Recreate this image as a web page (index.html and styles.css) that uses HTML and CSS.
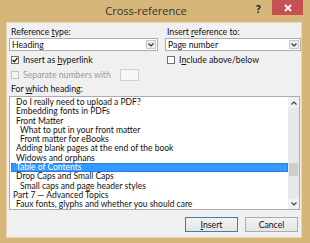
FILE: index.html
```html
<!DOCTYPE html>
<html lang="en">
<head>
  <meta charset="UTF-8">
  <title>Cross-reference</title>
  <link rel="stylesheet" href="styles.css">
</head>
<body>

<div class="window">
  <div class="titlebar">
    <div class="title">Cross-reference</div>
    <div class="help">?</div>
    <div class="close">
      <svg width="8" height="8" viewBox="0 0 8 8"><path d="M1 1 L7 7 M7 1 L1 7" stroke="#fff" stroke-width="1.8"/></svg>
    </div>
  </div>

  <div class="content">
    <div class="top-grid">
      <div class="field">
        <div class="label">Reference <u>t</u>ype:</div>
        <div class="combo">
          <span>Heading</span>
          <div class="drop"><svg width="6" height="4" viewBox="0 0 6 4"><path d="M0.5 0.5 L3 3 L5.5 0.5" fill="none" stroke="#333" stroke-width="1.2"/></svg></div>
        </div>
      </div>
      <div class="field">
        <div class="label">Insert <u>r</u>eference to:</div>
        <div class="combo">
          <span>Page number</span>
          <div class="drop"><svg width="6" height="4" viewBox="0 0 6 4"><path d="M0.5 0.5 L3 3 L5.5 0.5" fill="none" stroke="#333" stroke-width="1.2"/></svg></div>
        </div>
      </div>
      <label class="check">
        <span class="box"><svg width="6" height="6" viewBox="0 0 6 6"><path d="M0.6 3 L2.3 4.8 L5.4 0.8" fill="none" stroke="#111" stroke-width="1.3"/></svg></span>
        <span>Insert as <u>h</u>yperlink</span>
      </label>
      <label class="check">
        <span class="box"></span>
        <span>I<u>n</u>clude above/below</span>
      </label>
    </div>

    <div class="separate">
      <label class="check disabled">
        <span class="box"></span>
        <span>Separate numbers with</span>
      </label>
      <div class="sepbox"></div>
    </div>

    <div class="label heading-label">For <u>w</u>hich heading:</div>

    <div class="listbox">
      <ul class="items">
        <li class="l2">Do I really need to upload a PDF?</li>
        <li class="l2">Embedding fonts in PDFs</li>
        <li class="l2">Front Matter</li>
        <li class="l3">What to put in your front matter</li>
        <li class="l3">Front matter for eBooks</li>
        <li class="l2">Adding blank pages at the end of the book</li>
        <li class="l2">Widows and orphans</li>
        <li class="l2 selected">Table of Contents</li>
        <li class="l2">Drop Caps and Small Caps</li>
        <li class="l3">Small caps and page header styles</li>
        <li class="l1">Part 7 — Advanced Topics</li>
        <li class="l2">Faux fonts, glyphs and whether you should care</li>
      </ul>
      <div class="scrollbar">
        <div class="arrow"><svg width="6" height="4" viewBox="0 0 6 4"><path d="M0.5 3.5 L3 1 L5.5 3.5" fill="none" stroke="#444" stroke-width="1.2"/></svg></div>
        <div class="track"><div class="thumb"></div></div>
        <div class="arrow"><svg width="6" height="4" viewBox="0 0 6 4"><path d="M0.5 0.5 L3 3 L5.5 0.5" fill="none" stroke="#444" stroke-width="1.2"/></svg></div>
      </div>
    </div>

    <div class="buttons">
      <button class="btn default" type="button"><u>I</u>nsert</button>
      <button class="btn" type="button">Cancel</button>
    </div>
  </div>
</div>

</body>
</html>
```

FILE: styles.css
```css
body {
  margin: 0;
  font-family: Lato, 'Open Sans', sans-serif;
  font-size: 8.7px;
  color: #111;
}

.window {
  width: 310px;
  height: 243px;
  box-sizing: border-box;
  background: #d7b67a;
  padding: 0 8px 5px 6px;
  display: flex;
  flex-direction: column;
}

.titlebar {
  height: 22px;
  flex: none;
  display: flex;
  align-items: flex-start;
}

.title {
  flex: 1;
  text-align: center;
  font-family: 'Open Sans', sans-serif;
  font-size: 11px;
  color: #333;
  line-height: 22px;
  padding-left: 30px;
}

.help {
  width: 12px;
  font-family: 'Open Sans', sans-serif;
  font-weight: bold;
  font-size: 10px;
  color: #222;
  line-height: 18px;
  margin-right: 4px;
}

.close {
  width: 31px;
  height: 15px;
  background: #c75050;
  display: flex;
  align-items: center;
  justify-content: center;
  margin-right: -1px;
}

.content {
  flex: 1;
  background: #f0f0f0;
  border: 1px solid #e6d6b6;
  padding: 4px 2px 0 2px;
  display: flex;
  flex-direction: column;
}

.top-grid {
  display: grid;
  grid-template-columns: 149px 136px;
  column-gap: 7px;
  row-gap: 4px;
}

.label {
  padding-left: 2px;
  line-height: 10px;
  height: 10px;
}

.field .label {
  margin-bottom: 1px;
}

.combo {
  height: 13px;
  box-sizing: border-box;
  background: #fff;
  border: 1px solid #acacac;
  display: flex;
  align-items: center;
  padding-left: 2px;
  line-height: 11px;
}

.combo span {
  flex: 1;
}

.drop {
  width: 10px;
  height: 9px;
  margin-right: 1px;
  box-sizing: border-box;
  border: 1px solid #c8c8c8;
  background: #ededed;
  display: flex;
  align-items: center;
  justify-content: center;
}

.check {
  display: flex;
  align-items: center;
  gap: 4px;
  padding-left: 2px;
  height: 10px;
  line-height: 10px;
}

.box {
  width: 8px;
  height: 8px;
  flex: none;
  box-sizing: border-box;
  border: 1px solid #707070;
  background: #fff;
  display: flex;
  align-items: center;
  justify-content: center;
}

.check.disabled {
  color: #9a9a9a;
}

.check.disabled .box {
  border-color: #c4c4c4;
  background: #f4f4f4;
}

.separate {
  display: flex;
  align-items: center;
  margin-top: 3px;
  height: 13px;
}

.sepbox {
  width: 19px;
  height: 12px;
  margin-left: 9px;
  box-sizing: border-box;
  border: 1px solid #cfcfcf;
  background: #f7f7f7;
}

.heading-label {
  margin-top: 3px;
}

.listbox {
  margin-top: 2px;
  height: 114px;
  width: 291px;
  box-sizing: border-box;
  border: 1px solid #acacac;
  background: #fff;
  display: flex;
  overflow: hidden;
}

.items {
  list-style: none;
  margin: 0;
  padding: 1px 0 0 1px;
  flex: 1;
  font-size: 8.5px;
  line-height: 9.3px;
  white-space: nowrap;
  overflow: hidden;
}

.items li {
  height: 9.3px;
}

.items .l1 { padding-left: 2px; }
.items .l2 { padding-left: 5px; }
.items .l3 { padding-left: 9px; }

.items .selected {
  background: #3399ff;
  color: #fff;
  box-shadow: inset 0 0 0 1px #2a80d8;
}

.scrollbar {
  width: 11px;
  background: #e8e8e8;
  display: flex;
  flex-direction: column;
}

.arrow {
  height: 11px;
  display: flex;
  align-items: center;
  justify-content: center;
  background: #f0f0f0;
}

.track {
  flex: 1;
  padding-top: 55px;
}

.thumb {
  height: 13px;
  margin: 0 1px;
  background: #cdcdcd;
}

.buttons {
  display: flex;
  justify-content: flex-end;
  gap: 7px;
  margin-top: 7px;
  padding-right: 1px;
}

.btn {
  width: 53px;
  height: 15px;
  box-sizing: border-box;
  border: 1px solid #acacac;
  background: linear-gradient(#f2f2f2, #e5e5e5);
  font-family: inherit;
  font-size: 8.7px;
  color: #111;
  padding: 0;
  line-height: 13px;
}

.btn.default {
  border-color: #3c7fb1;
}
```
